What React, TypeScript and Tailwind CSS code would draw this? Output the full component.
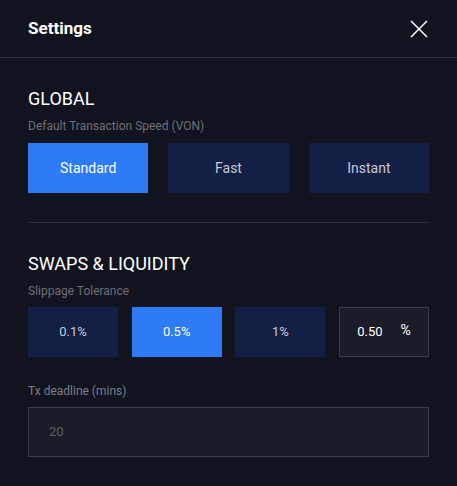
export default function App() {
  const speeds = ['Standard', 'Fast', 'Instant'];
  const slippage = ['0.1%', '0.5%', '1%'];
  return (
    <div className="w-[457px] h-[486px] bg-[#11141e] text-white font-['Roboto',sans-serif]">
      <div className="flex items-center justify-between h-[58px] px-7 border-b border-[#2c2f38]">
        <h1 className="text-[17px] font-bold">Settings</h1>
        <button className="w-[18px] h-[18px] mr-[1px]">
          <svg viewBox="0 0 18 18" width="18" height="18" fill="none" stroke="white" strokeWidth="1.5">
            <path d="M1 1L17 17M17 1L1 17" />
          </svg>
        </button>
      </div>

      <div className="px-7 pt-[30px]">
        <h2 className="text-[18px] leading-[22px] font-normal">GLOBAL</h2>
        <p className="text-[12px] text-[#6b6f7a] mt-[8px] leading-[16px]">Default Transaction Speed (VON)</p>
        <div className="grid grid-cols-3 gap-5 mt-[9px]">
          {speeds.map((s, i) => (
            <button
              key={s}
              className={`h-[50px] text-[14px] ${i === 0 ? 'bg-[#2d7bf6] text-white' : 'bg-[#141f45] text-[#c5c9d4]'}`}
            >
              {s}
            </button>
          ))}
        </div>

        <div className="border-t border-[#2c2f38] mt-[29px]" />

        <h2 className="text-[18px] leading-[22px] font-normal mt-[30px]">SWAPS &amp; LIQUIDITY</h2>
        <p className="text-[12px] text-[#6b6f7a] mt-[8px] leading-[16px]">Slippage Tolerance</p>
        <div className="flex justify-between mt-[8px]">
          {slippage.map((s, i) => (
            <button
              key={s}
              className={`w-[90px] h-[50px] text-[13px] ${i === 1 ? 'bg-[#2d7bf6] text-white' : 'bg-[#141f45] text-[#c5c9d4]'}`}
            >
              {s}
            </button>
          ))}
          <div className="w-[90px] h-[50px] flex items-center justify-center gap-[18px] bg-[#1a1d27] border border-[#3a3d47] text-[13px]">
            <span>0.50</span>
            <span className="-mt-[3px] text-[14px]">%</span>
          </div>
        </div>

        <p className="text-[12px] text-[#7a7e89] mt-[26px] leading-[16px]">Tx deadline (mins)</p>
        <div className="h-[50px] mt-[8px] flex items-center pl-[20px] bg-[#1a1d27] border border-[#3a3d47] text-[13px] text-[#5a5e69]">
          20
        </div>
      </div>
    </div>
  );
}
